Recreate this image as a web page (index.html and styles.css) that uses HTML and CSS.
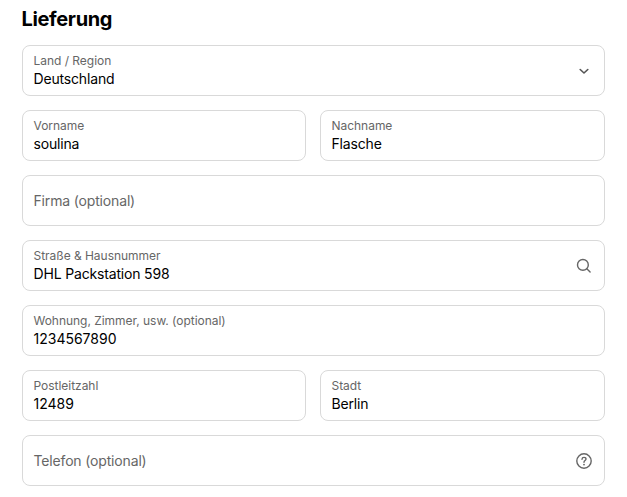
FILE: index.html
```html
<!DOCTYPE html>
<html lang="de">
<head>
<meta charset="utf-8">
<title>Lieferung</title>
<link rel="stylesheet" href="styles.css">
</head>
<body>
<main class="delivery">
  <h2 class="title">Lieferung</h2>
  <div class="fields">
    <div class="field wide">
      <div class="content"><span class="label">Land / Region</span><span class="value">Deutschland</span></div>
      <svg class="icon chevron" viewBox="0 0 16 16"><path d="M4.200 6.500 8 10 11.800 6.500"/></svg>
    </div>
    <div class="field"><div class="content"><span class="label">Vorname</span><span class="value">soulina</span></div></div>
    <div class="field"><div class="content"><span class="label">Nachname</span><span class="value">Flasche</span></div></div>
    <div class="field wide"><span class="placeholder">Firma (optional)</span></div>
    <div class="field wide">
      <div class="content"><span class="label">Straße &amp; Hausnummer</span><span class="value">DHL Packstation 598</span></div>
      <svg class="icon" viewBox="0 0 16 16"><circle cx="6.900" cy="6.900" r="5.400"/><path d="M10.800 10.800 14.100 14.100"/></svg>
    </div>
    <div class="field wide"><div class="content"><span class="label">Wohnung, Zimmer, usw. (optional)</span><span class="value number">1234567890</span></div></div>
    <div class="field"><div class="content"><span class="label">Postleitzahl</span><span class="value number">12489</span></div></div>
    <div class="field"><div class="content"><span class="label">Stadt</span><span class="value">Berlin</span></div></div>
    <div class="field wide">
      <span class="placeholder">Telefon (optional)</span>
      <svg class="icon" viewBox="0 0 16 16"><circle cx="8" cy="8" r="7.200"/><path d="M6 6.200C6.100 5 7 4.400 8 4.400c1.200 0 2 .7 2 1.700C10 7.500 8 7.600 8 9.200"/><circle class="dot" cx="8" cy="11.600" r=".9"/></svg>
    </div>
  </div>
</main>
</body>
</html>
```
FILE: styles.css
```css
* { box-sizing: border-box; }
body { margin: 0; background: #fff; color: #000; font-family: Inter, "Liberation Sans", sans-serif; }
.delivery { padding: 6px 22px 0; }
.title { margin: 0 0 0 -0.5px; font-size: 20px; line-height: 26px; font-weight: 650; letter-spacing: -0.35px; }
.fields { display: grid; grid-template-columns: 284px 285px; gap: 14px; margin-top: 13px; }
.field { height: 51px; display: flex; align-items: center; justify-content: space-between; padding: 0 12px 0 10.5px; border: 1px solid #d9d9d9; border-radius: 8px; }
.wide { grid-column: span 2; }
.content { display: flex; flex-direction: column; }
.label { font-size: 12px; line-height: 16px; letter-spacing: -0.03px; color: #666; }
.value { font-size: 14px; line-height: 20px; letter-spacing: -0.17px; }
.number { letter-spacing: 0; }
.placeholder { font-size: 14px; line-height: 20px; letter-spacing: -0.16px; color: #666; }
.icon { width: 16px; height: 16px; fill: none; stroke: #666; stroke-width: 1.4; stroke-linecap: round; stroke-linejoin: round; }
.chevron { stroke: #555; stroke-width: 1.6; }
.dot { fill: #666; stroke: none; }
```
